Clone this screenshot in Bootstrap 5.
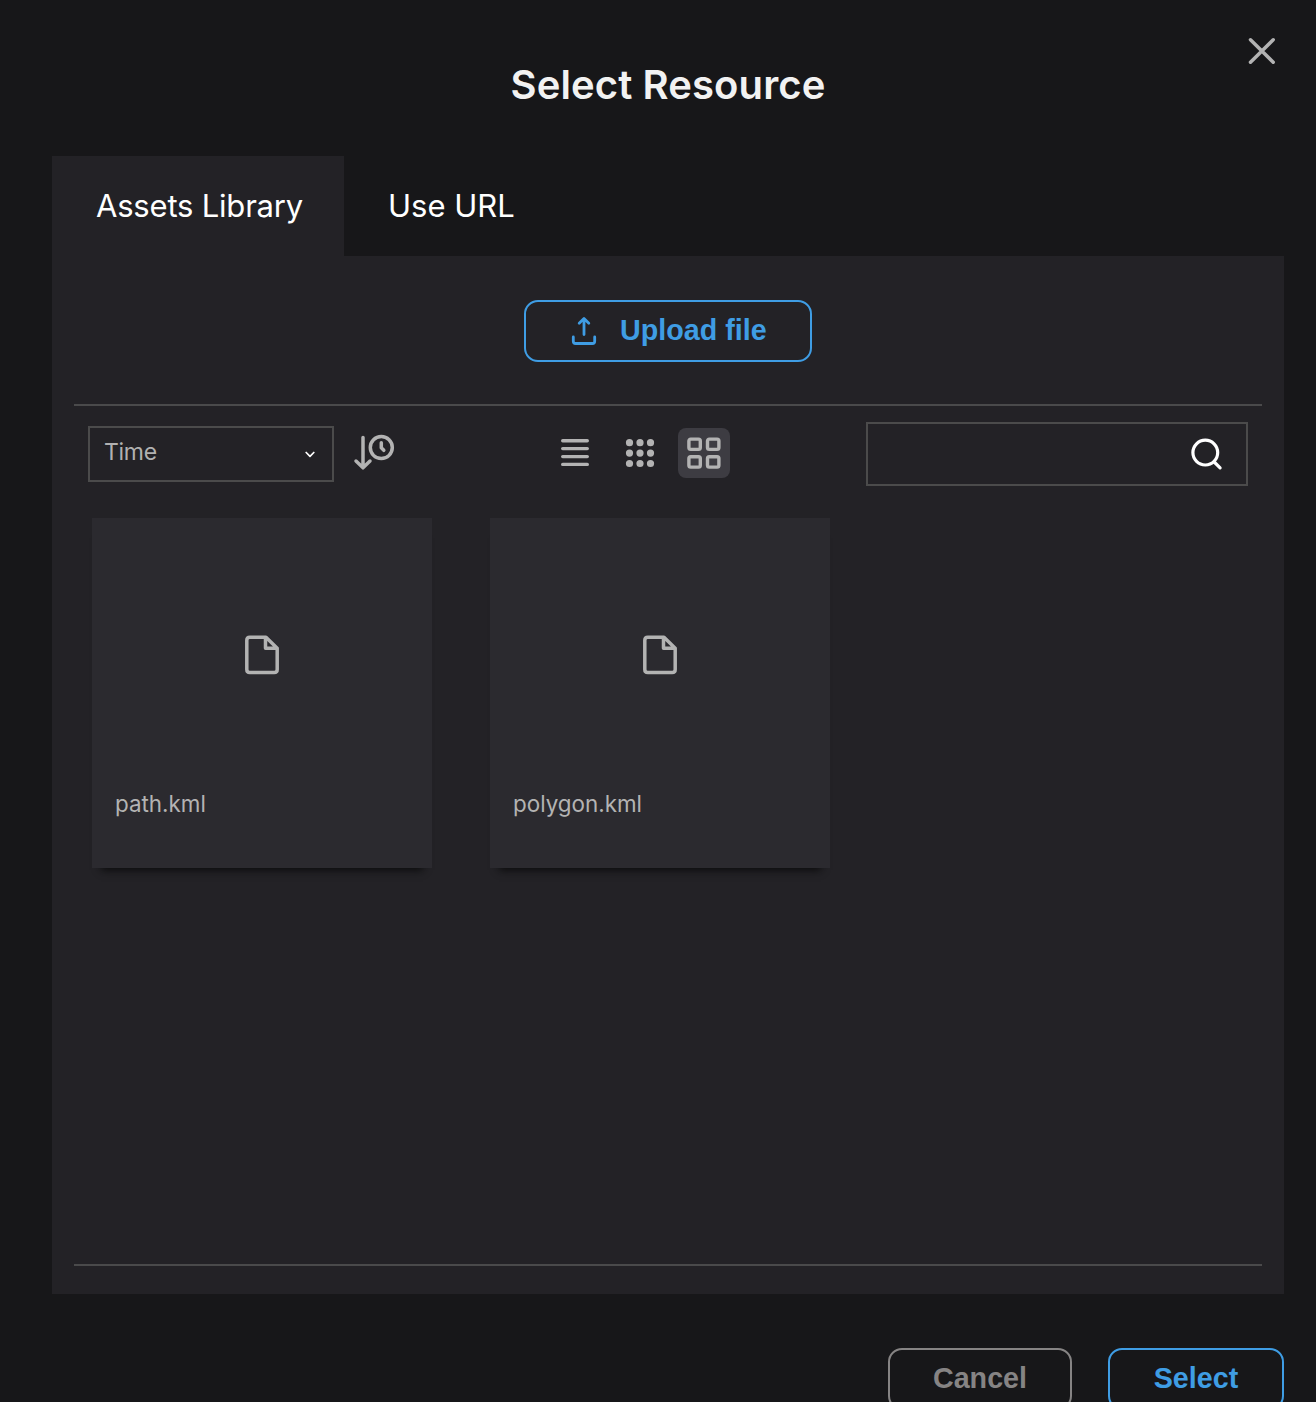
<!DOCTYPE html>
<html lang="en">
<head>
<meta charset="utf-8">
<meta name="viewport" content="width=device-width, initial-scale=1">
<title>Select Resource</title>
<link href="https://cdn.jsdelivr.net/npm/bootstrap@5.3.0/dist/css/bootstrap.min.css" rel="stylesheet">
<style>
  body { background: #171719; color: #fff; font-family: Inter, "Liberation Sans", sans-serif; height: 1402px; overflow: hidden; }
  svg { display: block; fill: none; stroke: currentColor; stroke-linecap: round; stroke-linejoin: round; flex: none; }
  .dialog { width: 1316px; height: 1402px; padding: 0 32px 0 52px; overflow: hidden; }
  .dialog-head { height: 156px; padding-top: 61px; }
  .dialog-title { font-size: 40px; line-height: 48px; font-weight: 600; color: #f2f2f2; letter-spacing: .1px; }
  .close-btn { top: 36px; right: 39px; color: #b3b3b3; }
  .tab-item { height: 100px; padding: 0 0 0 44px; font-size: 31px; color: #fff; line-height: 96px; border: 0; border-radius: 0; background: none; text-align: left; }
  .tab-item.active { background: #232226; width: 292px; letter-spacing: -.2px; }
  .panel { background: #232226; height: 1038px; padding: 44px 22px 28px; }
  .action { height: 62px; border: 2px solid #3f9de4; border-radius: 14px; color: #3f9de4; font: bold 28.7px/54px "Liberation Sans", sans-serif; padding: 0 0 2px; }
  .action-muted { color: #868484; border-color: #868484; }
  .upload { width: 288px; padding-left: 45px; gap: 23px; }
  .upload svg { margin-top: 2px; }
  .cancel { width: 184px; }
  .select { width: 176px; }
  .library { margin-top: 42px; height: 862px; border-top: 2px solid #4a4a4b; border-bottom: 2px solid #4a4a4b; padding: 16px 14px 0; }
  .toolbar { height: 64px; }
  .sort { width: 246px; height: 56px; border: 2px solid #4b4b4b; font-size: 23px; line-height: 48px; color: #b1b1b1; padding: 0 17px 0 14px; letter-spacing: -.3px; }
  .chevron { color: #fff; }
  .sort-dir { color: #b3b3b3; }
  .views { gap: 12.5px; margin: 6px 0 0 15px; }
  .view-btn, .view-btn.active { width: 52px; height: 50px; border-radius: 8px; color: #b3b3b3; }
  .view-btn.active { background: #3d3c42; }
  .search-box { width: 382px; height: 64px; border: 2px solid #4b4b4b; padding-right: 23px; }
  .asset-list { gap: 58px; padding: 32px 4px 0; }
  .asset { width: 340px; height: 350px; background: #2b2a2f; box-shadow: 0 11px 8px -9px #0a0a0b; color: #b3b3b3; }
  .asset-preview { height: 274px; }
  .asset-name { font-size: 22.4px; line-height: 28px; padding-left: 23px; margin-top: -2px; }
  .dialog-foot { gap: 36px; padding-top: 54px; }
</style>
<script src="https://cdn.jsdelivr.net/npm/bootstrap@5.3.0/dist/js/bootstrap.bundle.min.js"></script>
</head>
<body>
<main class="dialog position-relative">
  <button class="close-btn btn p-0 border-0 position-absolute" aria-label="Close">
    <svg width="30" height="30" stroke-width="3.5"><path d="M3.5 3.8 26.2 26.2M26.2 3.8 3.5 26.2"/></svg>
  </button>
  <header class="dialog-head text-center"><h1 class="dialog-title m-0">Select Resource</h1></header>
  <nav class="d-flex">
    <button class="tab-item active text-nowrap">Assets Library</button>
    <button class="tab-item text-nowrap">Use URL</button>
  </nav>
  <section class="panel">
    <button class="action upload btn d-flex align-items-center mx-auto">
      <svg width="26" height="30" stroke-width="2.8"><path d="M13 18.5V3M8.2 7.3 13 2.5l4.8 4.8M2.3 21v4.2q0 2.3 2.3 2.3h16.8q2.3 0 2.3-2.3V21"/></svg>
      <span>Upload file</span>
    </button>
    <div class="library">
      <div class="toolbar d-flex justify-content-between">
        <div class="d-flex mt-1">
          <div class="sort d-flex justify-content-between">
            <span>Time</span>
            <svg class="chevron align-self-center" width="10" height="7" stroke-width="1.7"><path d="m1.2 1.5 3.8 3.8 3.8-3.8"/></svg>
          </div>
          <svg class="sort-dir ms-3 mt-1" width="48" height="44" stroke-width="3.5"><path d="M13 7.5V37M6 31l7 6.8 7-6.8"/><circle cx="31.3" cy="17.6" r="11"/><path d="M31.3 12.8v5l2.5 2.5"/></svg>
        </div>
        <div class="views d-flex">
          <button class="view-btn btn p-0 border-0 d-flex align-items-center justify-content-center" aria-label="List"><svg width="30" height="30" stroke-width="3.4"><path d="M2.7 2.8h24.6M2.7 10.6h24.6M2.7 18.6h24.6M2.7 26.4h24.6"/></svg></button>
          <button class="view-btn btn p-0 border-0 d-flex align-items-center justify-content-center" aria-label="Small grid"><svg width="30" height="30" stroke-width="7.2"><path d="M4.5 4.7h.01M15 4.7h.01M25.5 4.7h.01M4.5 15.1h.01M15 15.1h.01M25.5 15.1h.01M4.5 25.5h.01M15 25.5h.01M25.5 25.5h.01"/></svg></button>
          <button class="view-btn active btn p-0 border-0 d-flex align-items-center justify-content-center" aria-label="Large grid"><svg width="34" height="32" stroke-width="3.4"><rect x="1.9" y="2.1" width="11.4" height="10.3" rx="1.8"/><rect x="20.5" y="2.1" width="11.4" height="10.3" rx="1.8"/><rect x="1.9" y="19.8" width="11.4" height="10.3" rx="1.8"/><rect x="20.5" y="19.8" width="11.4" height="10.3" rx="1.8"/></svg></button>
        </div>
        <div class="search-box d-flex justify-content-end align-items-center">
          <svg width="34" height="34" stroke-width="3.2"><circle cx="16.3" cy="15.6" r="12.4"/><path d="m25.2 25 5.9 5.9"/></svg>
        </div>
      </div>
      <div class="asset-list d-flex">
        <article class="asset">
          <div class="asset-preview d-flex align-items-center justify-content-center"><svg width="36" height="42" stroke-width="3.5"><path d="M22 3.3H5.8q-3 0-3 3v29.2q0 3 3 3h24.4q3 0 3-3V14.2zM21.5 3.3v10.9h11.7"/></svg></div>
          <div class="asset-name">path.kml</div>
        </article>
        <article class="asset">
          <div class="asset-preview d-flex align-items-center justify-content-center"><svg width="36" height="42" stroke-width="3.5"><path d="M22 3.3H5.8q-3 0-3 3v29.2q0 3 3 3h24.4q3 0 3-3V14.2zM21.5 3.3v10.9h11.7"/></svg></div>
          <div class="asset-name">polygon.kml</div>
        </article>
      </div>
    </div>
  </section>
  <footer class="dialog-foot d-flex justify-content-end">
    <button class="action action-muted cancel btn">Cancel</button>
    <button class="action select btn">Select</button>
  </footer>
</main>
</body>
</html>
